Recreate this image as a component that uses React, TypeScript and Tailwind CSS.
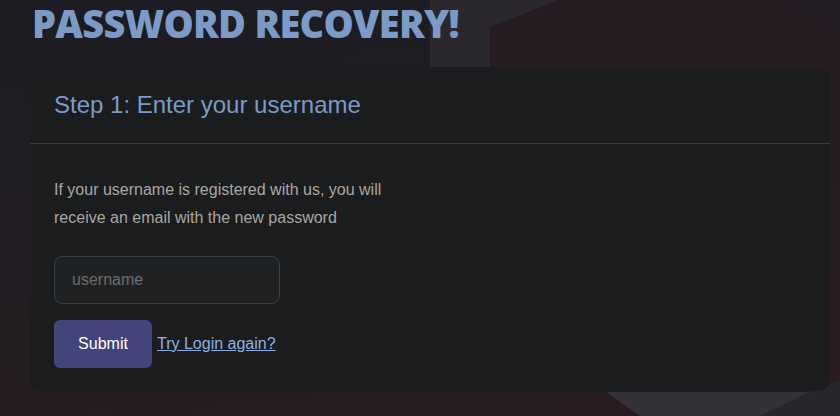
import { useState } from "react";

// ---------------- BACKGROUND ----------------
function Backdrop() {
  return (
    <svg className="absolute inset-0 w-full h-full" viewBox="0 0 840 416" preserveAspectRatio="none">
      <defs>
        <linearGradient id="bgGrad" x1="0" y1="0" x2="1" y2="1">
          <stop offset="0" stopColor="#1c1c23" />
          <stop offset="0.55" stopColor="#221c21" />
          <stop offset="1" stopColor="#2a1b1f" />
        </linearGradient>
        <linearGradient id="bgLeft" x1="0" y1="0" x2="0" y2="1">
          <stop offset="0" stopColor="#1c1c22" />
          <stop offset="1" stopColor="#261c22" />
        </linearGradient>
      </defs>
      <rect width="840" height="416" fill="url(#bgGrad)" />
      <rect x="0" y="0" width="430" height="416" fill="url(#bgLeft)" opacity="0.7" />
      <polygon points="430,0 560,0 490,27 490,80 430,80" fill="#2a282d" />
      <polygon points="560,0 780,0 840,30 840,80 490,80 490,27" fill="#241c20" />
      <polygon points="606,392 810,392 760,416 640,416" fill="#333238" />
      <polygon points="810,392 840,380 840,416 760,416" fill="#27262d" />
    </svg>
  );
}

// ========== RECOVERY PAGE ==========
export default function App() {
  const [username, setUsername] = useState<string>("");

  return (
    <div className="relative w-[840px] h-[416px] overflow-hidden bg-[#1e1c22]">
      <Backdrop />

      <div className="relative px-[30px]">
        {/* TITLE */}
        <h1
          className="text-[38px] leading-[46px] font-extrabold tracking-[-0.7px] text-[#7b9bc6] pl-[2px] h-[67px]"
          style={{ fontFamily: '"Open Sans", sans-serif' }}
        >
          PASSWORD RECOVERY!
        </h1>

        {/* CARD */}
        <div
          className="w-[800px] h-[324px] rounded-[12px] bg-[#1b1c1e]"
          style={{ fontFamily: '"Liberation Sans", Arial, sans-serif' }}
        >
          <div className="h-[77px] flex items-center px-6 border-b border-[#393a3c]">
            <h2 className="text-[24px] text-[#7b9bc6]">Step 1: Enter your username</h2>
          </div>

          <div className="px-6 pt-[32px]">
            <p className="text-[16px] leading-[28px] text-[#aaa7a2]">
              If your username is registered with us, you will
              <br />
              receive an email with the new password
            </p>

            <input
              value={username}
              onChange={(e) => setUsername(e.target.value)}
              placeholder="username"
              className="mt-6 block w-[226px] h-[48px] rounded-[8px] border border-[#3d4043] bg-[#1f2122] px-[17px] text-[16px] text-gray-200 placeholder:text-[#6c6d6e] outline-none"
            />

            <div className="mt-[16px] flex items-center gap-[5px]">
              <button className="w-[98px] h-[48px] rounded-[6px] bg-[#434479] text-white text-[16px]">
                Submit
              </button>
              <a href="#" className="text-[16px] text-[#8cb3e3] underline">
                Try Login again?
              </a>
            </div>
          </div>
        </div>
      </div>
    </div>
  );
}
